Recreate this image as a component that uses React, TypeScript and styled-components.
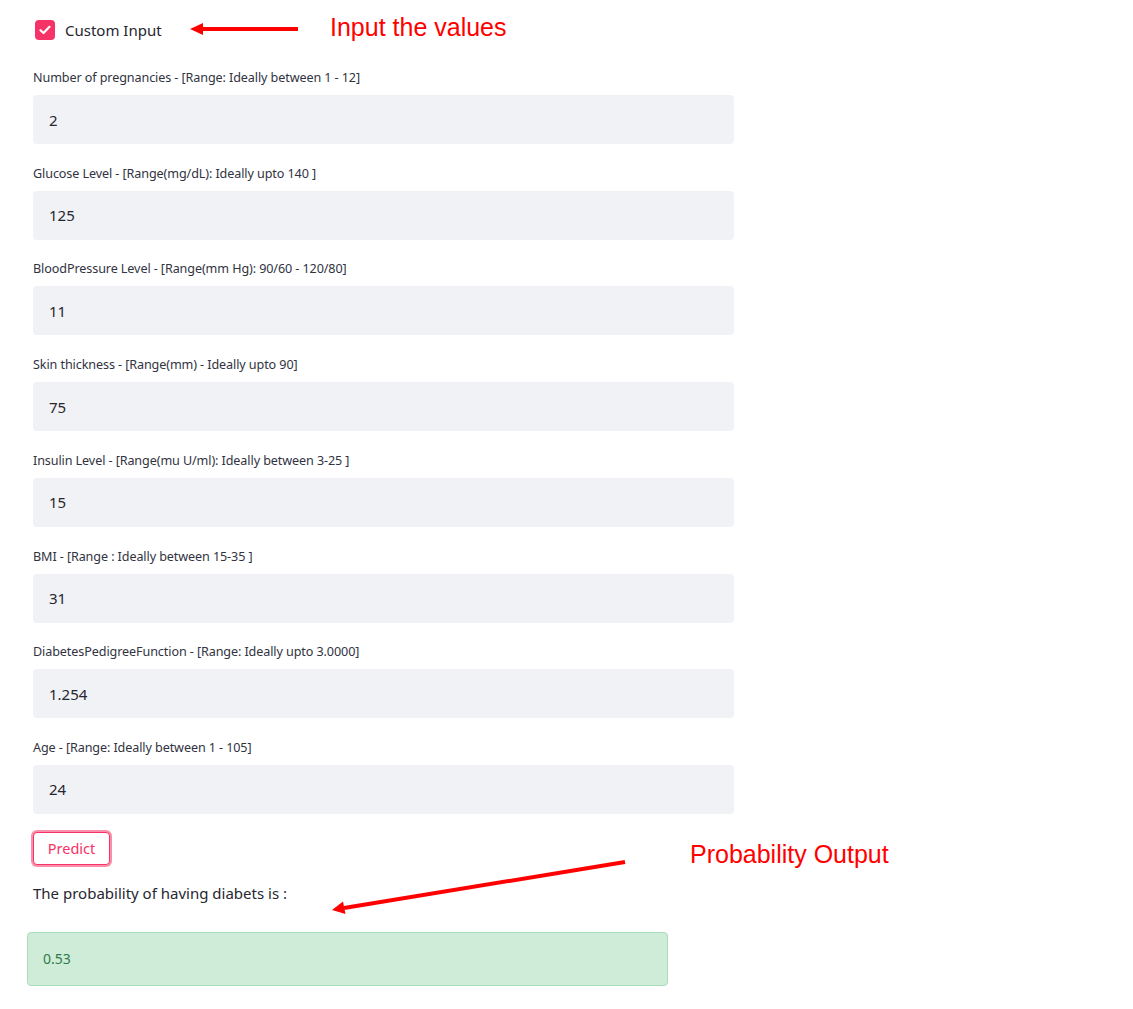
import React from "react";
import styled, { createGlobalStyle } from "styled-components";

const GlobalStyle = createGlobalStyle`
  html, body { margin: 0; padding: 0; background: #ffffff; }
  body { font-family: "Noto Sans", "Open Sans", sans-serif; color: #262730; }
  * { box-sizing: border-box; }
`;

const Page = styled.div`
  position: relative;
  width: 1133px;
  min-height: 1009px;
  background: #fff;
`;

const Column = styled.div`
  width: 734px;
  padding: 20px 0 0 33px;
  display: flex;
  flex-direction: column;
`;

const CheckRow = styled.label`
  display: flex;
  align-items: center;
  gap: 10px;
  height: 20px;
  margin-left: 2px;
  font-size: 15px;
  color: #262730;
`;

const Box = styled.span`
  width: 20px;
  height: 20px;
  border-radius: 4px;
  background: #f63366;
  display: flex;
  align-items: center;
  justify-content: center;
`;

const Fields = styled.div`
  margin-top: 29px;
  display: flex;
  flex-direction: column;
  gap: 20.71px;
`;

const Field = styled.div`
  display: flex;
  flex-direction: column;
  gap: 8px;
`;

const Label = styled.div`
  font-size: 12.6px;
  line-height: 18px;
  color: #31333f;
  letter-spacing: -0.1px;
`;

const Input = styled.div`
  height: 49px;
  border-radius: 4px;
  background: #f0f2f6;
  padding-left: 16px;
  display: flex;
  align-items: center;
  font-size: 15px;
  color: #262730;
`;

const PredictButton = styled.button`
  margin-top: 18px;
  align-self: flex-start;
  width: 77px;
  height: 33px;
  border: 1px solid #f63366;
  border-radius: 4px;
  background: #fff;
  color: #f63366;
  font-family: "Noto Sans", sans-serif;
  font-size: 14.5px;
  box-shadow: 0 0 0 2px rgba(246, 51, 102, 0.55);
  padding: 0;
`;

const ResultText = styled.div`
  margin-top: 17px;
  font-size: 15px;
  line-height: 22px;
  color: #262730;
`;

const SuccessBox = styled.div`
  margin-top: 28px;
  margin-left: -6px;
  width: 641px;
  height: 54px;
  border-radius: 4px;
  background: #cfecd8;
  border: 1px solid #a9ddb9;
  padding-left: 15px;
  display: flex;
  align-items: center;
  font-size: 14px;
  color: #317a4a;
`;

const Note = styled.div<{ $x: number; $y: number }>`
  position: absolute;
  left: ${(p) => p.$x}px;
  top: ${(p) => p.$y}px;
  font-family: "Liberation Sans", Arial, sans-serif;
  font-size: 25px;
  line-height: 28px;
  color: #ff0000;
  white-space: nowrap;
`;

const Overlay = styled.svg`
  position: absolute;
  left: 0;
  top: 0;
  pointer-events: none;
`;

const fields = [
  ["Number of pregnancies - [Range: Ideally between 1 - 12]", "2"],
  ["Glucose Level - [Range(mg/dL): Ideally upto 140 ]", "125"],
  ["BloodPressure Level - [Range(mm Hg): 90/60 - 120/80]", "11"],
  ["Skin thickness - [Range(mm) - Ideally upto 90]", "75"],
  ["Insulin Level - [Range(mu U/ml): Ideally between 3-25 ]", "15"],
  ["BMI - [Range : Ideally between 15-35 ]", "31"],
  ["DiabetesPedigreeFunction - [Range: Ideally upto 3.0000]", "1.254"],
  ["Age - [Range: Ideally between 1 - 105]", "24"],
];

export default function App() {
  return (
    <Page>
      <GlobalStyle />
      <Column>
        <CheckRow>
          <Box>
            <svg width="12" height="10" viewBox="0 0 12 10">
              <path d="M1.5 5.2 L4.5 8 L10.5 1.8" fill="none" stroke="#fff" strokeWidth="2.2" strokeLinecap="round" strokeLinejoin="round" />
            </svg>
          </Box>
          Custom Input
        </CheckRow>
        <Fields>
          {fields.map(([l, v]) => (
            <Field key={l}>
              <Label>{l}</Label>
              <Input>{v}</Input>
            </Field>
          ))}
        </Fields>
        <PredictButton>Predict</PredictButton>
        <ResultText>The probability of having diabets is :</ResultText>
        <SuccessBox>0.53</SuccessBox>
      </Column>
      <Note $x={330} $y={13}>Input the values</Note>
      <Note $x={690} $y={840}>Probability Output</Note>
      <Overlay width="1133" height="1009" viewBox="0 0 1133 1009">
        <line x1="298" y1="29" x2="200" y2="29" stroke="#ff0000" strokeWidth="4" />
        <polygon points="190,29 203,23 203,35" fill="#ff0000" />
        <line x1="625" y1="862" x2="344" y2="908" stroke="#ff0000" strokeWidth="4" />
        <polygon points="332,910 343,901.5 345.5,914" fill="#ff0000" />
      </Overlay>
    </Page>
  );
}
